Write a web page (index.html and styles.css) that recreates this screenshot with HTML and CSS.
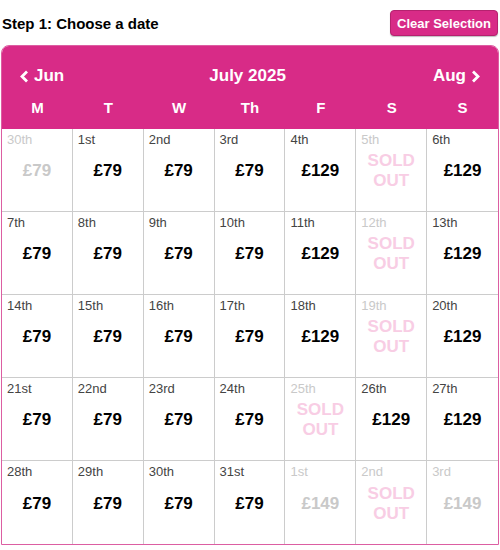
FILE: index.html
```html
<!DOCTYPE html>
<html lang="en">
<head>
  <meta charset="UTF-8" />
  <meta name="viewport" content="width=device-width, initial-scale=1.0" />
  <title>Choose a date</title>
  <link rel="stylesheet" href="styles.css">
</head>
<body>

  <div class="page">
    <!-- Title row -->
    <div class="top-bar">
      <h3 class="step-title">Step 1: Choose a date</h3>
      <button class="clear-button">Clear Selection</button>
    </div>

    <div class="calendar">
      <!-- Header -->
      <div class="calendar-header">
        <div class="month-nav">
          <a href="#" class="nav-link">
            <svg width="10" height="13" viewBox="0 0 10 13"><polyline points="8,1.5 3,6.5 8,11.5" fill="none" stroke="#fff" stroke-width="2.8" /></svg>
            Jun
          </a>
          <span class="month-title">July 2025</span>
          <a href="#" class="nav-link">
            Aug
            <svg width="10" height="13" viewBox="0 0 10 13"><polyline points="2,1.5 7,6.5 2,11.5" fill="none" stroke="#fff" stroke-width="2.8" /></svg>
          </a>
        </div>
        <div class="weekdays">
          <span>M</span><span>T</span><span>W</span><span>Th</span><span>F</span><span>S</span><span>S</span>
        </div>
      </div>

      <!-- Days -->
      <div class="days">
        <div class="day disabled"><span class="date">30th</span><span class="price">£79</span></div>
        <div class="day"><span class="date">1st</span><span class="price">£79</span></div>
        <div class="day"><span class="date">2nd</span><span class="price">£79</span></div>
        <div class="day"><span class="date">3rd</span><span class="price">£79</span></div>
        <div class="day"><span class="date">4th</span><span class="price">£129</span></div>
        <div class="day disabled"><span class="date">5th</span><span class="price sold-out">SOLD<br>OUT</span></div>
        <div class="day"><span class="date">6th</span><span class="price">£129</span></div>

        <div class="day"><span class="date">7th</span><span class="price">£79</span></div>
        <div class="day"><span class="date">8th</span><span class="price">£79</span></div>
        <div class="day"><span class="date">9th</span><span class="price">£79</span></div>
        <div class="day"><span class="date">10th</span><span class="price">£79</span></div>
        <div class="day"><span class="date">11th</span><span class="price">£129</span></div>
        <div class="day disabled"><span class="date">12th</span><span class="price sold-out">SOLD<br>OUT</span></div>
        <div class="day"><span class="date">13th</span><span class="price">£129</span></div>

        <div class="day"><span class="date">14th</span><span class="price">£79</span></div>
        <div class="day"><span class="date">15th</span><span class="price">£79</span></div>
        <div class="day"><span class="date">16th</span><span class="price">£79</span></div>
        <div class="day"><span class="date">17th</span><span class="price">£79</span></div>
        <div class="day"><span class="date">18th</span><span class="price">£129</span></div>
        <div class="day disabled"><span class="date">19th</span><span class="price sold-out">SOLD<br>OUT</span></div>
        <div class="day"><span class="date">20th</span><span class="price">£129</span></div>

        <div class="day"><span class="date">21st</span><span class="price">£79</span></div>
        <div class="day"><span class="date">22nd</span><span class="price">£79</span></div>
        <div class="day"><span class="date">23rd</span><span class="price">£79</span></div>
        <div class="day"><span class="date">24th</span><span class="price">£79</span></div>
        <div class="day disabled"><span class="date">25th</span><span class="price sold-out">SOLD<br>OUT</span></div>
        <div class="day"><span class="date">26th</span><span class="price">£129</span></div>
        <div class="day"><span class="date">27th</span><span class="price">£129</span></div>

        <div class="day"><span class="date">28th</span><span class="price">£79</span></div>
        <div class="day"><span class="date">29th</span><span class="price">£79</span></div>
        <div class="day"><span class="date">30th</span><span class="price">£79</span></div>
        <div class="day"><span class="date">31st</span><span class="price">£79</span></div>
        <div class="day disabled"><span class="date">1st</span><span class="price">£149</span></div>
        <div class="day disabled"><span class="date">2nd</span><span class="price sold-out">SOLD<br>OUT</span></div>
        <div class="day disabled"><span class="date">3rd</span><span class="price">£149</span></div>
      </div>
    </div>
  </div>

</body>
</html>
```

FILE: styles.css
```css
body {
  font-family: "Liberation Sans", Arial, sans-serif;
  margin: 0;
  padding: 0;
  background: #fff;
  color: #000;
}

.page {
  width: 500px;
  padding: 0 1px;
  box-sizing: border-box;
}

/* Title row */
.top-bar {
  display: flex;
  justify-content: space-between;
  align-items: center;
  height: 26px;
  margin-top: 10px;
  margin-bottom: 9px;
  padding-left: 1px;
}

.step-title {
  margin: 0;
  font-size: 15px;
  font-weight: bold;
}

.clear-button {
  height: 26px;
  margin-right: 1px;
  padding: 0 6px;
  background-color: #d82b87;
  border: 1px solid #b5226f;
  border-radius: 4px;
  box-shadow: 0 1px 1px rgba(0, 0, 0, 0.25);
  color: #fff;
  font-family: inherit;
  font-size: 13px;
  font-weight: bold;
  cursor: pointer;
}

/* Calendar */
.calendar {
  border: 1px solid #dc5ea2;
  border-radius: 8px 8px 0 0;
  overflow: hidden;
}

.calendar-header {
  height: 83px;
  box-sizing: border-box;
  padding-top: 18px;
  background-color: #d82b87;
  color: #fff;
}

.month-nav {
  display: flex;
  justify-content: space-between;
  align-items: center;
  height: 24px;
  padding: 0 17px;
  font-size: 17px;
  font-weight: bold;
}

.nav-link {
  display: flex;
  align-items: center;
  gap: 5px;
  color: #fff;
  text-decoration: none;
}

.month-title {
  margin-right: 2px;
}

.weekdays {
  display: grid;
  grid-template-columns: repeat(7, 1fr);
  margin-top: 10px;
  line-height: 20px;
  font-size: 15px;
  font-weight: bold;
  text-align: center;
}

.days {
  display: grid;
  grid-template-columns: repeat(7, 1fr);
}

.day {
  display: flex;
  flex-direction: column;
  height: 83px;
  box-sizing: border-box;
  padding: 4px 5px 16px;
  border-right: 1px solid #ccc;
  border-bottom: 1px solid #ccc;
}

.day:nth-child(7n) {
  border-right: none;
}

.day:nth-last-child(-n+7) {
  border-bottom: none;
}

.date {
  font-size: 13px;
  line-height: 14px;
  color: #444;
}

.price {
  flex-grow: 1;
  display: flex;
  align-items: center;
  justify-content: center;
  text-align: center;
  font-size: 17px;
  font-weight: bold;
  line-height: 20px;
}

.day.disabled .date,
.day.disabled .price {
  color: #c9c9c9;
}

.day.disabled .price.sold-out {
  color: #f8cde4;
}
```
